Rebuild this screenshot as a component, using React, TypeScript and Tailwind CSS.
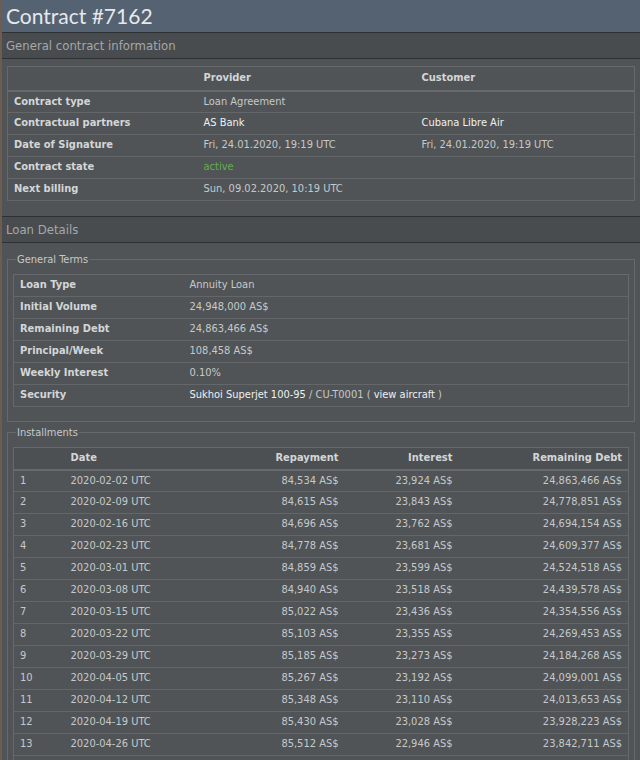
import React from 'react';

type Installment = [string, string, string, string];

const installments: Installment[] = [
  ['2020-02-02 UTC', '84,534 AS$', '23,924 AS$', '24,863,466 AS$'],
  ['2020-02-09 UTC', '84,615 AS$', '23,843 AS$', '24,778,851 AS$'],
  ['2020-02-16 UTC', '84,696 AS$', '23,762 AS$', '24,694,154 AS$'],
  ['2020-02-23 UTC', '84,778 AS$', '23,681 AS$', '24,609,377 AS$'],
  ['2020-03-01 UTC', '84,859 AS$', '23,599 AS$', '24,524,518 AS$'],
  ['2020-03-08 UTC', '84,940 AS$', '23,518 AS$', '24,439,578 AS$'],
  ['2020-03-15 UTC', '85,022 AS$', '23,436 AS$', '24,354,556 AS$'],
  ['2020-03-22 UTC', '85,103 AS$', '23,355 AS$', '24,269,453 AS$'],
  ['2020-03-29 UTC', '85,185 AS$', '23,273 AS$', '24,184,268 AS$'],
  ['2020-04-05 UTC', '85,267 AS$', '23,192 AS$', '24,099,001 AS$'],
  ['2020-04-12 UTC', '85,348 AS$', '23,110 AS$', '24,013,653 AS$'],
  ['2020-04-19 UTC', '85,430 AS$', '23,028 AS$', '23,928,223 AS$'],
  ['2020-04-26 UTC', '85,512 AS$', '22,946 AS$', '23,842,711 AS$'],
  ['2020-05-03 UTC', '85,594 AS$', '22,864 AS$', '23,757,117 AS$'],
  ['2020-05-10 UTC', '85,676 AS$', '22,782 AS$', '23,671,441 AS$'],
];

// rows only have horizontal rules, the table carries the outer frame
const cell = 'h-[22px] border-b border-[#63676a] px-[6px] py-0 align-middle';
const label = `${cell} font-bold text-[#d3d6d8]`;
const value = `${cell} text-[#c6c9cb]`;
const valueLink = `${cell} text-[#eef0f1]`;
const valueGreen = `${cell} text-[#5fb04f]`;

function SectionHeader({ title }: { title: string }) {
  return (
    <div className="h-[27px] border-y border-[#2e3133] bg-[#494c4e] px-[4px] text-[13px] leading-[25px] text-[#a4a8aa]">
      {title}
    </div>
  );
}

function Box({ legend, children }: { legend: string; children: React.ReactNode }) {
  return (
    <fieldset className="border border-[#666a6d] px-[5px] pb-[14px] pt-[8px]">
      <legend className="ml-[3px] px-[1px] text-[11px] leading-[13px] text-[#c6c9cb]">{legend}</legend>
      {children}
    </fieldset>
  );
}

export default function App() {
  return (
    <div
      className="min-h-[760px] border-l-2 border-[#6e5c50] bg-[#505456] text-[11px] text-[#c6c9cb]"
      style={{ fontFamily: 'Tahoma, "DejaVu Sans Condensed", "Liberation Sans", sans-serif' }}
    >
      <div
        className="h-[32px] bg-[#556272] px-[4px] text-[21px] leading-[31px] text-[#e4e8ec]"
        style={{ fontFamily: 'Lato, "Liberation Sans", sans-serif' }}
      >
        Contract #7162
      </div>

      <SectionHeader title="General contract information" />
      <div className="px-[5px] pb-[15px] pt-[7px]">
        <table className="w-full table-fixed border-collapse border border-[#666a6d]">
          <colgroup>
            <col className="w-[190px]" />
            <col className="w-[218px]" />
            <col />
          </colgroup>
          <tbody>
            <tr className="h-[24px] border-b-2 border-[#666a6d]">
              <td className={cell}></td>
              <td className={label}>Provider</td>
              <td className={label}>Customer</td>
            </tr>
            <tr>
              <td className={label}>Contract type</td>
              <td className={value}>Loan Agreement</td>
              <td className={value}></td>
            </tr>
            <tr>
              <td className={label}>Contractual partners</td>
              <td className={valueLink}>AS Bank</td>
              <td className={valueLink}>Cubana Libre Air</td>
            </tr>
            <tr>
              <td className={label}>Date of Signature</td>
              <td className={value}>Fri, 24.01.2020, 19:19 UTC</td>
              <td className={value}>Fri, 24.01.2020, 19:19 UTC</td>
            </tr>
            <tr>
              <td className={label}>Contract state</td>
              <td className={valueGreen}>active</td>
              <td className={value}></td>
            </tr>
            <tr>
              <td className={label}>Next billing</td>
              <td className={value}>Sun, 09.02.2020, 10:19 UTC</td>
              <td className={value}></td>
            </tr>
          </tbody>
        </table>
      </div>

      <SectionHeader title="Loan Details" />
      <div className="flex flex-col gap-[4px] px-[5px] pt-[10px]">
        <Box legend="General Terms">
          <table className="w-full table-fixed border-collapse border border-[#666a6d]">
            <colgroup>
              <col className="w-[170px]" />
              <col />
            </colgroup>
            <tbody>
              <tr>
                <td className={label}>Loan Type</td>
                <td className={value}>Annuity Loan</td>
              </tr>
              <tr>
                <td className={label}>Initial Volume</td>
                <td className={value}>24,948,000 AS$</td>
              </tr>
              <tr>
                <td className={label}>Remaining Debt</td>
                <td className={value}>24,863,466 AS$</td>
              </tr>
              <tr>
                <td className={label}>Principal/Week</td>
                <td className={value}>108,458 AS$</td>
              </tr>
              <tr>
                <td className={label}>Weekly Interest</td>
                <td className={value}>0.10%</td>
              </tr>
              <tr>
                <td className={label}>Security</td>
                <td className={value}>
                  <span className="text-[#eef0f1]">Sukhoi Superjet 100-95</span> / CU-T0001 ({' '}
                  <span className="text-[#eef0f1]">view aircraft</span> )
                </td>
              </tr>
            </tbody>
          </table>
        </Box>

        <Box legend="Installments">
          <table className="w-full table-fixed border-collapse border border-[#666a6d]">
            <colgroup>
              <col className="w-[51px]" />
              <col className="w-[140px]" />
              <col className="w-[140px]" />
              <col className="w-[114px]" />
              <col />
            </colgroup>
            <thead>
              <tr className="border-b-2 border-[#666a6d] bg-[#4c5052]">
                <th className={label}></th>
                <th className={`${label} text-left`}>Date</th>
                <th className={`${label} text-right`}>Repayment</th>
                <th className={`${label} text-right`}>Interest</th>
                <th className={`${label} text-right`}>Remaining Debt</th>
              </tr>
            </thead>
            <tbody>
              {installments.map(([date, repay, interest, remaining], i) => (
                <tr key={date}>
                  <td className={value}>{i + 1}</td>
                  <td className={value}>{date}</td>
                  <td className={`${value} text-right`}>{repay}</td>
                  <td className={`${value} text-right`}>{interest}</td>
                  <td className={`${value} text-right`}>{remaining}</td>
                </tr>
              ))}
            </tbody>
          </table>
        </Box>
      </div>
    </div>
  );
}
